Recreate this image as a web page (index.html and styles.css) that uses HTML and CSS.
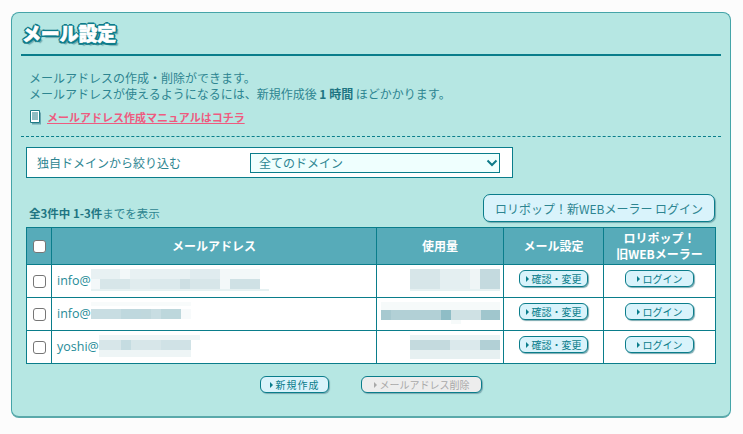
FILE: index.html
```html
<!DOCTYPE html>
<html lang="ja">
<head>
<meta charset="utf-8">
<title>メール設定</title>
<link rel="stylesheet" href="styles.css">
</head>
<body>
<main class="panel">
  <h1 class="title">メール設定</h1>
  <div class="intro">
    <p>メールアドレスの作成・削除ができます。</p>
    <p>メールアドレスが使えるようになるには、新規作成後 <b>1 時間</b> ほどかかります。</p>
  </div>
  <div class="manual">
    <svg class="doc" width="13" height="15" viewBox="0 0 13 15"><path d="M3 2.500h9v12H3z" fill="#6aa6ae"/><path d="M1.500.5h9v12h-9z" fill="#fff" stroke="#1e7b86"/><path d="M3 3h6M3 5h6M3 7h6M3 9h6" stroke="#1e7b86"/></svg>
    <a class="manual-link" href="#">メールアドレス作成マニュアルはコチラ</a>
  </div>
  <div class="dots"></div>
  <form class="filter">
    <label class="filter-label" for="dom">独自ドメインから絞り込む</label>
    <div class="select-wrap">
      <select id="dom" class="select"><option>全てのドメイン</option></select>
      <svg class="chev" width="12" height="8" viewBox="0 0 12 8"><path d="M1.500 1.500 6 6l4.500-4.500" fill="none" stroke="#0d7a88" stroke-width="2"/></svg>
    </div>
  </form>
  <div class="meta">
    <span class="count"><b>全3件中 1-3件</b>までを表示</span>
    <button class="new-mailer" type="button">ロリポップ！新WEBメーラー ログイン</button>
  </div>
  <table class="list">
    <thead>
      <tr>
        <th class="c-check"><input class="check" type="checkbox"></th>
        <th class="c-mail">メールアドレス</th>
        <th class="c-use">使用量</th>
        <th class="c-set">メール設定</th>
        <th class="c-login">ロリポップ！<br>旧WEBメーラー</th>
      </tr>
    </thead>
    <tbody>
      <tr>
        <td class="c-check"><input class="check" type="checkbox"></td>
        <td class="c-mail"><span class="addr">info@</span><svg class="mosaic" width="180" height="24" viewBox="0 0 180 24">
          <rect x="0" y="0" width="169" height="20" fill="#f3f8f9"/>
          <rect x="0" y="0" width="29" height="10" fill="#e8f1f3"/><rect x="39" y="0" width="60" height="10" fill="#e8f1f3"/><rect x="99" y="0" width="30" height="10" fill="#e0ecef"/>
          <rect x="9" y="10" width="30" height="10" fill="#d7e6e9"/><rect x="39" y="10" width="50" height="10" fill="#e0ecee"/><rect x="59" y="10" width="30" height="10" fill="#dbe9ec"/><rect x="89" y="10" width="10" height="10" fill="#cddfe3"/><rect x="99" y="10" width="30" height="10" fill="#d7e6e9"/><rect x="139" y="10" width="30" height="10" fill="#cfe1e5"/>
          <rect x="0" y="20" width="178" height="2" fill="#e6f1f2"/>
        </svg></td>
        <td class="c-use"><svg class="mosaic" width="90" height="24" viewBox="0 0 90 24">
          <rect x="0" y="0" width="90" height="20" fill="#d7e6e9"/><rect x="30" y="0" width="30" height="20" fill="#e4eff1"/><rect x="60" y="0" width="10" height="20" fill="#eff5f6"/><rect x="70" y="0" width="20" height="20" fill="#c4dadf"/>
          <rect x="0" y="20" width="90" height="2" fill="#e6f1f2"/>
        </svg></td>
        <td class="c-set"><button class="mini" type="button"><i class="tri"></i>確認・変更</button></td>
        <td class="c-login"><button class="mini" type="button"><i class="tri"></i>ログイン</button></td>
      </tr>
      <tr>
        <td class="c-check"><input class="check" type="checkbox"></td>
        <td class="c-mail"><span class="addr">info@</span><svg class="mosaic" width="100" height="24" viewBox="0 0 100 24">
          <rect x="0" y="0" width="100" height="4" fill="#f8fbfb"/>
          <rect x="0" y="7" width="90" height="10" fill="#c8dde2"/><rect x="30" y="7" width="20" height="10" fill="#bfd8de"/><rect x="50" y="7" width="10" height="10" fill="#c0d8dd"/><rect x="70" y="7" width="20" height="10" fill="#bdd7dc"/>
          <rect x="90" y="7" width="10" height="10" fill="#f7fafb"/>
        </svg></td>
        <td class="c-use"><svg class="mosaic" width="119" height="24" viewBox="0 0 119 24">
          <rect x="0" y="0" width="119" height="8" fill="#f6fafa"/>
          <rect x="0" y="8" width="119" height="10" fill="#b2d0d6"/><rect x="0" y="8" width="10" height="10" fill="#a7c9d0"/><rect x="60" y="8" width="10" height="10" fill="#8fbdc6"/><rect x="70" y="8" width="30" height="10" fill="#cfe1e4"/><rect x="100" y="8" width="19" height="10" fill="#a0c6cd"/>
          <rect x="70" y="18" width="10" height="4" fill="#f6fafa"/>
        </svg></td>
        <td class="c-set"><button class="mini" type="button"><i class="tri"></i>確認・変更</button></td>
        <td class="c-login"><button class="mini" type="button"><i class="tri"></i>ログイン</button></td>
      </tr>
      <tr>
        <td class="c-check"><input class="check" type="checkbox"></td>
        <td class="c-mail"><span class="addr">yoshi@</span><svg class="mosaic" width="102" height="24" viewBox="0 0 102 24">
          <rect x="0" y="0" width="101" height="22" fill="#eef5f6"/>
          <rect x="0" y="5" width="92" height="10" fill="#d7e6e9"/><rect x="22" y="5" width="10" height="10" fill="#c5dce1"/><rect x="62" y="5" width="30" height="10" fill="#d0e2e6"/>
          <rect x="92" y="5" width="10" height="17" fill="#fff"/>
        </svg></td>
        <td class="c-use"><svg class="mosaic" width="90" height="24" viewBox="0 0 90 24">
          <rect x="0" y="0" width="90" height="5" fill="#eaf3f4"/>
          <rect x="0" y="5" width="90" height="10" fill="#c4dade"/><rect x="40" y="5" width="30" height="10" fill="#dbe9ec"/><rect x="70" y="5" width="20" height="10" fill="#b2d0d6"/>
          <rect x="0" y="15" width="90" height="9" fill="#e6f0f1"/>
        </svg></td>
        <td class="c-set"><button class="mini" type="button"><i class="tri"></i>確認・変更</button></td>
        <td class="c-login"><button class="mini" type="button"><i class="tri"></i>ログイン</button></td>
      </tr>
    </tbody>
  </table>
  <div class="actions">
    <button class="mini wide" type="button"><i class="tri"></i>新規作成</button>
    <button class="mini wider off" type="button" disabled><i class="tri"></i>メールアドレス削除</button>
  </div>
</main>
</body>
</html>
```
FILE: styles.css
```css
* { box-sizing: border-box; }
html, body { margin: 0; padding: 0; }
body {
  width: 743px;
  height: 434px;
  overflow: hidden;
  background: #fcfcfc;
  padding: 12px 12px 0 11px;
  font-family: "Noto Sans CJK JP", "Noto Sans", sans-serif;
  font-size: 12px;
  color: #2d8591;
}
.panel {
  height: 406px;
  background: #b6e7e3;
  border: 1px solid #45a4a8;
  border-bottom: 2px solid #5aa9aa;
  border-radius: 8px;
  padding: 0 9px;
}
.title {
  margin: 0;
  height: 43px;
  border-bottom: 2px solid #0a7d8b;
  padding: 8px 0 0 1px;
  font-size: 19px;
  line-height: 24px;
  font-weight: 900;
  color: #fff;
  letter-spacing: -0.2px;
  -webkit-text-stroke: 0.6px #fff;
  text-shadow:
    -2px 0 0 #0e7c8a, 2px 0 0 #0e7c8a, 0 -2px 0 #0e7c8a, 0 2px 0 #0e7c8a,
    -1.500px -1.500px 0 #0e7c8a, 1.500px -1.500px 0 #0e7c8a, -1.500px 1.500px 0 #0e7c8a, 1.500px 1.500px 0 #0e7c8a,
    3px 3px 1px #6fa8ad;
}
.intro { padding: 14px 0 0 8px; line-height: 16px; }
.intro p { margin: 0; }
.intro b { color: #1e7582; }
.manual {
  display: flex;
  align-items: center;
  gap: 5px;
  height: 20px;
  margin-top: 5px;
  padding-left: 8px;
}
.manual-link {
  color: #ee5b80;
  font-size: 11px;
  font-weight: 700;
}
.dots {
  margin-top: 9px;
  border-top: 1px dashed #0a7d8b;
}
.filter {
  display: flex;
  align-items: center;
  width: 487px;
  height: 31px;
  margin: 10px 0 0 5px;
  padding: 0 12px 0 10px;
  background: #fff;
  border: 1px solid #0a7d8b;
}
.filter-label { width: 213px; font-size: 12px; }
.select-wrap { position: relative; width: 250px; height: 20px; }
.select {
  display: block;
  width: 100%;
  height: 100%;
  padding: 0 0 2px 8px;
  border: 1px solid #0a7d8b;
  border-radius: 0;
  background: #effffe;
  color: #2d8591;
  font: inherit;
  font-size: 12px;
  appearance: none;
}
.chev { position: absolute; top: 6px; right: 2px; }
.meta {
  display: flex;
  justify-content: space-between;
  align-items: flex-end;
  height: 44px;
  margin: 0 6px 5px 8px;
}
.count { font-size: 11.500px; padding-bottom: 1px; }
.count b { color: #1e7582; }
.new-mailer {
  width: 232px;
  height: 28px;
  padding: 0;
  background: #d9f3fb;
  border: 1px solid #0a7d8b;
  border-radius: 7px;
  box-shadow: 1px 1px 1px #6fa8ad;
  color: #2d8591;
  font: inherit;
  font-size: 12px;
}
.list {
  width: 689px;
  margin-left: 5px;
  table-layout: fixed;
  border-collapse: collapse;
  background: #fff;
}
.list th, .list td {
  border: 1px solid #0a7d8b;
  padding: 0;
  line-height: 16px;
}
.list th {
  height: 37px;
  background: #57abb9;
  color: #fff;
  font-size: 12px;
  font-weight: 700;
}
.list td { height: 33px; }
.c-check { width: 25px; text-align: center; }
.c-mail { width: 325px; }
.c-use { width: 127px; }
.c-set { width: 100px; }
.c-login { width: 112px; }
.list td.c-mail { padding-left: 5px; white-space: nowrap; }
.addr { vertical-align: middle; color: #1f8b97; font-family: "Open Sans", "Noto Sans", sans-serif; font-size: 12.500px; }
.list td.c-use { text-align: right; padding-right: 3px; }
.list td.c-set, .list td.c-login { text-align: center; vertical-align: top; padding-top: 5px; }
.mosaic { display: inline-block; vertical-align: middle; }
.check {
  display: block;
  width: 13px;
  height: 13px;
  margin: 0 auto;
  appearance: none;
  background: #fff;
  border: 1px solid #767676;
  border-radius: 3px;
}
.mini {
  display: inline-flex;
  align-items: center;
  justify-content: center;
  gap: 3px;
  width: 69px;
  height: 17px;
  padding: 0;
  vertical-align: top;
  background: #d9f3fb;
  border: 1px solid #0a7d8b;
  border-radius: 6px;
  box-shadow: 1px 1px 1px #7aa9b0;
  color: #0a7d8b;
  font: inherit;
  font-size: 10px;
  line-height: 15px;
}
.tri {
  width: 0;
  height: 0;
  border-left: 3px solid #0a7d8b;
  border-top: 3px solid transparent;
  border-bottom: 3px solid transparent;
}
.actions {
  display: flex;
  justify-content: center;
  gap: 32px;
  margin-top: 12px;
}
.wide { width: 69px; letter-spacing: 1px; }
.wider { width: 121px; }
.off { background: #ededed; color: #a9a9a9; }
.off .tri { border-left-color: #a9a9a9; }
```
